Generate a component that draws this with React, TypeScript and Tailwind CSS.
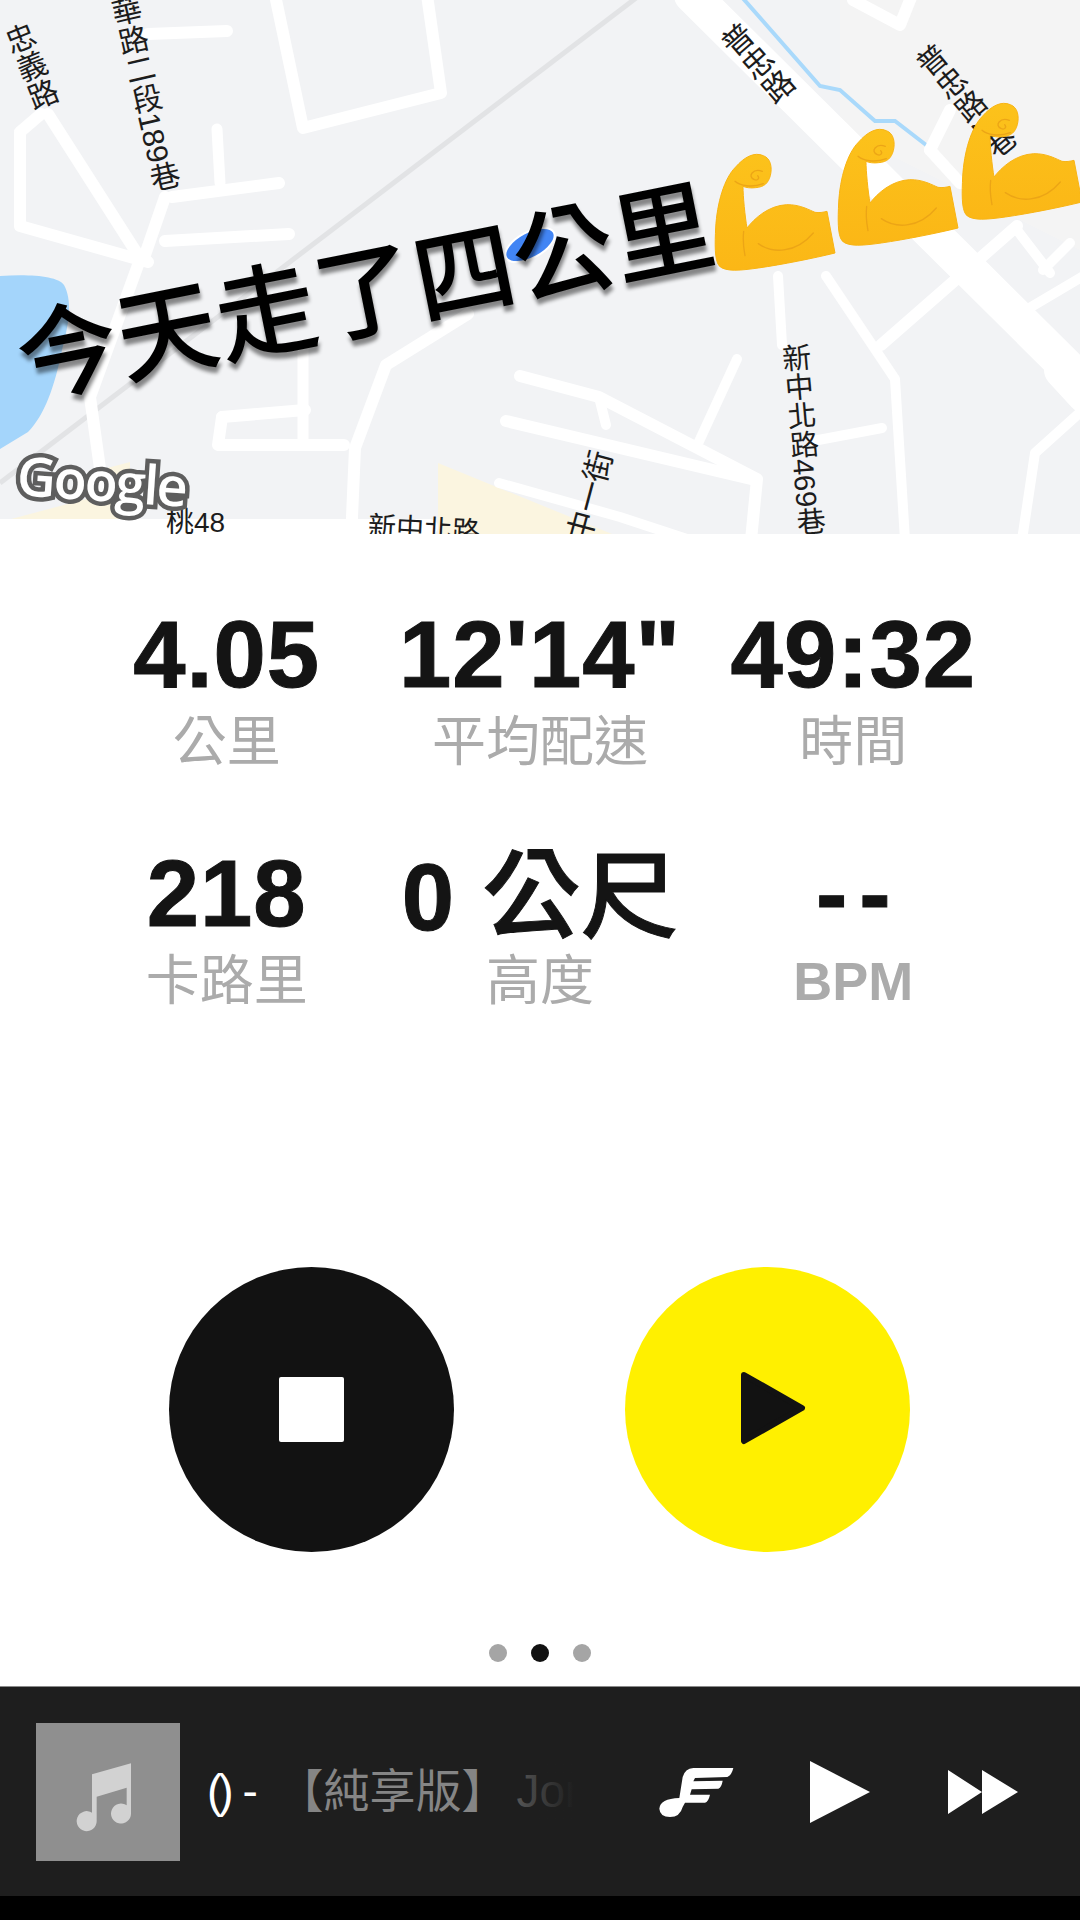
import React from "react";

function Muscle({ x, y }: { x: number; y: number }) {
  return (
    <g transform={`translate(${x} ${y}) scale(0.3333)`}>
      <path
        d="M12 338 C-2 320 0 270 2 225 C6 150 28 75 62 42 C88 12 118 -4 145 8 C168 16 172 45 166 68 C160 90 148 102 122 104 C108 106 92 104 84 100 C84 130 90 190 96 225 C120 195 160 158 215 155 C255 154 285 172 300 178 C312 180 325 178 336 175 L360 300 C300 315 200 335 130 345 C80 352 30 358 12 338 Z"
        fill="url(#muscleFill)"
        stroke="#f8b414"
        strokeWidth="3"
      />
      <path d="M86 235 C82 270 88 295 90 308" fill="none" stroke="#eca516" strokeWidth="4" strokeLinecap="round" />
      <path d="M130 272 C170 300 240 305 295 240" fill="none" stroke="#eca516" strokeWidth="4" strokeLinecap="round" />
      <path d="M60 85 C75 98 110 105 145 92" fill="none" stroke="#eca516" strokeWidth="4" strokeLinecap="round" />
      <path d="M142 55 C115 45 95 70 118 80 C128 84 135 76 128 68" fill="none" stroke="#eca516" strokeWidth="4" strokeLinecap="round" />
    </g>
  );
}

function MapDrawing() {
  const roads: [string, number][] = [
    ["M692 -5 L1085 385", 36],
    ["M1062 370 L1085 395", 36],
    ["M275 -5 L303 128 L441 93 L427 -5", 12],
    ["M41 114 L20 132 L20 226 L148 262", 12],
    ["M48 114 L138 255", 12],
    ["M148 34 L227 31", 12],
    ["M217 129 L220 183", 11],
    ["M172 197 L279 183", 12],
    ["M165 197 L145 255", 12],
    ["M165 241 L289 234", 12],
    ["M138 265 L90 397 L103 490", 12],
    ["M222 417 L218 445 L344 445", 12],
    ["M222 417 L305 410", 12],
    ["M303 345 L303 445", 11],
    ["M468 314 L386 365 L355 448 L351 540", 12],
    ["M520 376 L599 397 L757 479 L751 540", 12],
    ["M599 397 L606 425", 10],
    ["M506 421 L751 479", 12],
    ["M499 483 L620 517 L690 540", 10],
    ["M737 359 L696 448", 10],
    ["M813 441 L882 428", 10],
    ["M778 276 L782 345", 10],
    ["M826 276 L895 379 L905 540", 10],
    ["M1017 226 L881 345", 12],
    ["M1017 230 L1050 273", 10],
    ["M1070 243 L1043 270", 10],
    ["M1026 310 L1085 275", 10],
    ["M1022 540 L1035 453 L1085 408", 10],
    ["M853 0 L900 25 L912 -5", 12],
    ["M930 150 L950 110", 12],
    ["M930 150 L960 183", 12],
    ["M0 527 L430 527", 16],
  ];
  return (
    <svg className="absolute inset-0" width="1080" height="534" viewBox="0 0 1080 534">
      <defs>
        <linearGradient id="muscleFill" x1="0" y1="0" x2="0" y2="1">
          <stop offset="0" stopColor="#fcc21b" />
          <stop offset="1" stopColor="#fbb716" />
        </linearGradient>
      </defs>
      <rect width="1080" height="534" fill="#f2f3f5" />
      <path d="M840 0 L1080 0 L1080 250 L840 130 Z" fill="#f4f4f4" />
      <path d="M438 463 L612 534 L438 534 Z" fill="#fbf5e0" />
      <path d="M0 534 L0 522 L90 498 L100 470 L130 462 L130 534 Z" fill="#fbf5e0" />
      <path d="M640 -5 L0 483" stroke="#e2e3e5" strokeWidth="5" fill="none" />
      <path
        d="M0 276 C30 274 58 276 64 285 C72 300 70 320 62 350 C55 385 45 415 28 432 L0 449 Z"
        fill="#a4d5fb"
      />
      <path d="M740 -5 L820 86 L840 90 L875 121 L895 121 L930 148" stroke="#a9d9fb" strokeWidth="4" fill="none" />
      {roads.map(([d, w], i) => (
        <path key={i} d={d} stroke="#ffffff" strokeWidth={w} strokeLinecap="round" strokeLinejoin="round" fill="none" />
      ))}
      <ellipse cx="530" cy="245" rx="27" ry="13" transform="rotate(-28 530 245)" fill="#4285f4" stroke="#ffffff" strokeWidth="2" />
    </svg>
  );
}

function MapLabel({ text, className }: { text: string; className: string }) {
  return <div className={`absolute leading-none text-[#1c1c1c] whitespace-nowrap ${className}`}>{text}</div>;
}

function Stat({
  value,
  label,
  labelClass,
  valueClass,
}: {
  value: React.ReactNode;
  label: string;
  labelClass?: string;
  valueClass?: string;
}) {
  return (
    <div className="flex flex-col items-center">
      <div
        className={`h-[94px] text-[94px] leading-none font-bold text-[#141414] tracking-[1px] whitespace-nowrap [-webkit-text-stroke:1px_#141414] ${valueClass ?? ""}`}
      >
        {value}
      </div>
      <div className={`mt-[13px] h-[54px] text-[54px] leading-none text-[#ababab] ${labelClass ?? ""}`}>{label}</div>
    </div>
  );
}

export default function App() {
  return (
    <div className="relative w-[1080px] h-[1920px] overflow-hidden bg-white flex flex-col [font-family:'Liberation_Sans','Noto_Sans_CJK_TC',sans-serif]">
      {/* map */}
      <div className="relative h-[534px] w-full shrink-0 overflow-hidden">
        <MapDrawing />
        <MapLabel text="忠義路" className="text-[30px] left-[14px] top-[22px] [writing-mode:vertical-rl] -rotate-[22deg]" />
        <MapLabel text="華路二段189巷" className="text-[30px] left-[128px] top-[-6px] [writing-mode:vertical-rl] -rotate-[13deg]" />
        <MapLabel text="普忠路" className="text-[31px] left-[740px] top-[18px] [writing-mode:vertical-rl] -rotate-[41deg]" />
        <MapLabel text="普忠路2巷" className="text-[30px] left-[949px] top-[34px] [writing-mode:vertical-rl] -rotate-[40deg]" />
        <MapLabel text="新中北路469巷" className="text-[29px] left-[786px] top-[343px] [writing-mode:vertical-rl] -rotate-[5deg]" />
        <MapLabel text="中一街" className="text-[31px] left-[544px] top-[481px] -rotate-[75deg]" />
        <MapLabel text="桃48" className="text-[28px] left-[166px] top-[509px]" />
        <MapLabel text="新中北路" className="text-[28px] left-[368px] top-[516px] rotate-[3deg]" />

        {/* Google mark */}
        <div className="absolute left-[17px] top-[446px] text-[54px] leading-[68px] font-semibold tracking-[-2px] text-white rotate-[4deg] [font-family:'Open_Sans',sans-serif] [-webkit-text-stroke:9px_#5e5e5e] [paint-order:stroke_fill]">
          Google
        </div>

        {/* caption */}
        <div className="absolute left-[19px] top-[313px] origin-left -rotate-[11.3deg] text-[101px] leading-none font-medium text-black whitespace-nowrap [text-shadow:0_6px_4px_rgba(0,0,0,0.45)]">
          今天走了四公里
        </div>
        <svg className="absolute inset-0" width="1080" height="534" viewBox="0 0 1080 534">
          <Muscle x={715} y={153} />
          <Muscle x={838} y={128} />
          <Muscle x={962} y={102} />
        </svg>
      </div>

      {/* stats */}
      <div className="grid grid-cols-3 gap-y-[78px] px-[70px] pt-[74px]">
        <Stat value="4.05" label="公里" />
        <Stat value={"12'14\""} label="平均配速" />
        <Stat value="49:32" label="時間" />
        <Stat value="218" label="卡路里" />
        <Stat
          value={
            <>
              0 <span className="text-[98px] font-medium tracking-normal">公尺</span>
            </>
          }
          label="高度"
        />
        <Stat value="--" label="BPM" labelClass="font-bold" valueClass="tracking-[12px] pl-[12px]" />
      </div>

      {/* controls */}
      <div className="mt-[259px] flex justify-center gap-[171px] pr-[2px]">
        <div className="flex h-[285px] w-[285px] items-center justify-center rounded-full bg-[#121212]">
          <div className="h-[65px] w-[65px] rounded-[2px] bg-white" />
        </div>
        <div className="flex h-[285px] w-[285px] items-center justify-center rounded-full bg-[#fff000]">
          <svg width="66" height="74" viewBox="0 0 66 74" className="ml-[12px] -mt-[4px]">
            <path d="M4 4 L62 37 L4 70 Z" fill="#121212" stroke="#121212" strokeWidth="6" strokeLinejoin="round" />
          </svg>
        </div>
      </div>

      {/* pager */}
      <div className="mt-[92px] flex justify-center gap-[24px]">
        <div className="h-[18px] w-[18px] rounded-full bg-[#a5a5a5]" />
        <div className="h-[18px] w-[18px] rounded-full bg-[#111111]" />
        <div className="h-[18px] w-[18px] rounded-full bg-[#a5a5a5]" />
      </div>

      {/* player */}
      <div className="mt-[24px] flex h-[210px] items-center border-t border-[#8a8a8a] bg-[#1e1e1e]">
        <div className="ml-[36px] flex h-[138px] w-[144px] shrink-0 items-center justify-center bg-[#8f8f8f]">
          <svg width="150" height="140" viewBox="0 0 450 420" className="shrink-0 translate-x-[3px] translate-y-[4px]">
            <path
              d="M168 145 L285 112 L285 263 A30 30 0 1 1 272 238 L272 185 L182 212 L182 285 A30 30 0 1 1 168 260 Z"
              fill="#d2d2d2"
            />
          </svg>
        </div>
        <div className="relative ml-[24px] h-[60px] w-[370px] shrink-0 overflow-hidden">
          <div className="whitespace-nowrap pl-[3px] text-[46px] leading-[58px] text-white">
            <span className="tracking-[-4px]">()</span> - <span className="ml-[7px] text-[#858585]">【純享版】</span>
            <span className="ml-[9px] text-[#6a6a6a]">Jon</span>
          </div>
          <div className="absolute inset-y-0 right-0 w-[80px] bg-gradient-to-r from-transparent to-[#1e1e1e]" />
        </div>
        <svg width="110" height="80" viewBox="0 0 330 240" className="ml-[66px] shrink-0">
          <path
            d="M280 48 L160 48 Q135 50 128 75 L118 138 Q60 140 58 170 Q60 195 90 195 Q120 195 128 165 L135 152 L195 152 Q205 150 210 128 L150 128 L155 112 L235 110 Q245 105 248 86 L160 88 L165 78 L262 75 Q275 70 280 48 Z"
            fill="#ffffff"
          />
        </svg>
        <svg width="60" height="62" viewBox="0 0 60 62" className="ml-[60px] shrink-0">
          <path d="M0 0 L60 31 L0 62 Z" fill="#ffffff" />
        </svg>
        <svg width="70" height="44" viewBox="0 0 70 44" className="ml-[78px] shrink-0">
          <path d="M0 0 L34 22 L0 44 Z M34 0 L70 22 L34 44 Z" fill="#ffffff" />
        </svg>
      </div>

      <div className="h-[24px] w-full bg-black" />
    </div>
  );
}
